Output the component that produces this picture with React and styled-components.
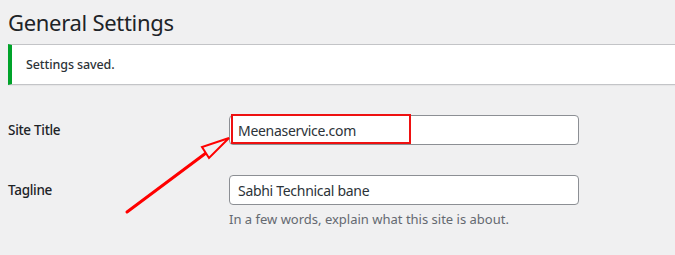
import React from 'react';
import styled, { createGlobalStyle } from 'styled-components';

const GlobalStyle = createGlobalStyle`
  html, body {
    margin: 0;
    padding: 0;
    background: #f0f0f1;
  }
  body {
    font-family: "Noto Sans", "Open Sans", sans-serif;
    color: #1d2327;
    overflow: hidden;
  }
`;

const Page = styled.div`
  position: relative;
  width: 675px;
  height: 255px;
  padding-left: 8px;
  box-sizing: border-box;
`;

const Heading = styled.h1`
  margin: 0;
  padding-top: 7px;
  font-size: 22px;
  font-weight: 400;
  letter-spacing: -0.3px;
  line-height: 30px;
  color: #1d2327;
`;

const Notice = styled.div`
  margin-top: 7px;
  height: 41px;
  box-sizing: border-box;
  background: #fff;
  border: 1px solid #c3c4c7;
  border-left: 4px solid #00a32a;
  border-right: none;
  box-shadow: 0 1px 1px rgba(0, 0, 0, 0.04);
  display: flex;
  align-items: center;
  padding-left: 14px;
  font-size: 12.5px;
  font-weight: 500;
  letter-spacing: -0.1px;
  color: #2c3338;
`;

const Form = styled.div`
  margin-top: 30px;
  display: flex;
  flex-direction: column;
  gap: 30px;
`;

const Row = styled.div`
  display: grid;
  grid-template-columns: 221px 350px;
  align-items: start;
`;

const Label = styled.label`
  font-size: 13.5px;
  font-weight: 500;
  letter-spacing: -0.3px;
  line-height: 30px;
  color: #1d2327;
`;

const Field = styled.div`
  position: relative;
  display: flex;
  flex-direction: column;
`;

const Input = styled.div`
  height: 30px;
  box-sizing: border-box;
  background: #fff;
  border: 1px solid #8c8f94;
  border-radius: 4px;
  padding: 0 8px;
  display: flex;
  align-items: center;
  font-size: 14px;
  letter-spacing: -0.3px;
  color: #2c3338;
`;

const Highlight = styled.div`
  position: absolute;
  left: 2px;
  top: -1px;
  width: 180px;
  height: 30px;
  box-sizing: border-box;
  border: 2px solid #ee1111;
  pointer-events: none;
`;

const Description = styled.p`
  margin: 4px 0 0;
  font-size: 13px;
  line-height: 20px;
  color: #646970;
`;

const Arrow = styled.svg`
  position: absolute;
  left: 0;
  top: 0;
  pointer-events: none;
`;

export default function App() {
  return (
    <>
      <GlobalStyle />
      <Page>
        <Heading>General Settings</Heading>
        <Notice>Settings saved.</Notice>
        <Form>
          <Row>
            <Label>Site Title</Label>
            <Field>
              <Input>Meenaservice.com</Input>
              <Highlight />
            </Field>
          </Row>
          <Row>
            <Label>Tagline</Label>
            <Field>
              <Input>Sabhi Technical bane</Input>
              <Description>In a few words, explain what this site is about.</Description>
            </Field>
          </Row>
        </Form>
        <Arrow width="675" height="255" viewBox="0 0 675 255">
          <line x1="127" y1="212" x2="206" y2="153" stroke="#f00" strokeWidth="3" strokeLinecap="round" />
          <polygon points="229,138 202,147 209,158" fill="#f0f0f1" stroke="#f00" strokeWidth="2" strokeLinejoin="miter" />
        </Arrow>
      </Page>
    </>
  );
}
